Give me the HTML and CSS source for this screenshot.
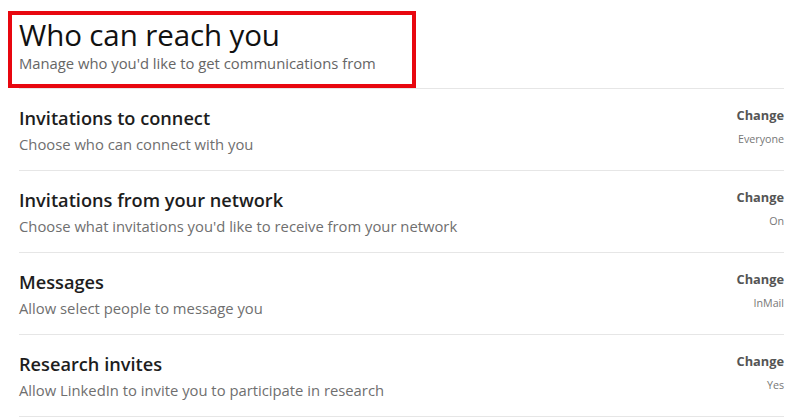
FILE: index.html
```html
<!DOCTYPE html>
<html lang="en">
<head>
<meta charset="utf-8">
<title>Who can reach you</title>
<link rel="stylesheet" href="styles.css">
</head>
<body>
<div class="page">
  <header class="head">
    <h1 class="head-title">Who can reach you</h1>
    <p class="head-sub">Manage who you'd like to get communications from</p>
  </header>
  <ul class="list">
    <li class="row">
      <div class="row-main">
        <h3 class="row-title">Invitations to connect</h3>
        <p class="row-desc">Choose who can connect with you</p>
      </div>
      <div class="row-side">
        <span class="row-change">Change</span>
        <span class="row-value">Everyone</span>
      </div>
    </li>
    <li class="row">
      <div class="row-main">
        <h3 class="row-title">Invitations from your network</h3>
        <p class="row-desc">Choose what invitations you'd like to receive from your network</p>
      </div>
      <div class="row-side">
        <span class="row-change">Change</span>
        <span class="row-value">On</span>
      </div>
    </li>
    <li class="row">
      <div class="row-main">
        <h3 class="row-title">Messages</h3>
        <p class="row-desc">Allow select people to message you</p>
      </div>
      <div class="row-side">
        <span class="row-change">Change</span>
        <span class="row-value">InMail</span>
      </div>
    </li>
    <li class="row">
      <div class="row-main">
        <h3 class="row-title">Research invites</h3>
        <p class="row-desc">Allow LinkedIn to invite you to participate in research</p>
      </div>
      <div class="row-side">
        <span class="row-change">Change</span>
        <span class="row-value">Yes</span>
      </div>
    </li>
  </ul>
</div>
</body>
</html>
```
FILE: styles.css
```css
* { box-sizing: border-box; }
html, body { margin: 0; padding: 0; background: #fff; }
body {
  font-family: "Open Sans", "Noto Sans", Arial, sans-serif;
  color: rgba(0,0,0,0.9);
  width: 800px;
  height: 417px;
  overflow: hidden;
}
.page { padding-top: 11px; }
.head {
  margin-left: 8px;
  width: 408px;
  height: 77px;
  border: 4px solid #e8070f;
  padding: 2px 0 0 7px;
}
.head-title {
  margin: 0;
  font-weight: 400;
  font-size: 29.5px;
  line-height: 36px;
  color: #111;
  letter-spacing: -0.1px;
}
.head-sub {
  margin: 0;
  font-size: 14.8px;
  line-height: 20px;
  color: #666;
}
.list {
  list-style: none;
  margin: 0 0 0 19px;
  padding: 0;
  width: 765px;
  border-top: 1px solid #e6e6e6;
}
.row {
  height: 82px;
  border-bottom: 1px solid #e6e6e6;
  display: flex;
  justify-content: space-between;
  padding-top: 17px;
}
.row-title {
  margin: 0;
  font-size: 18.2px;
  font-weight: 600;
  line-height: 24px;
  color: #1d1d1d;
}
.row-desc {
  margin: 4px 0 0;
  font-size: 14.8px;
  line-height: 20px;
  color: #6f6f6f;
}
.row-side {
  display: flex;
  flex-direction: column;
  align-items: flex-end;
}
.row-change {
  font-size: 12.8px;
  font-weight: 700;
  line-height: 18px;
  color: #555;
}
.row-value {
  margin-top: 8px;
  font-size: 10.7px;
  line-height: 14px;
  color: #777;
}
```
